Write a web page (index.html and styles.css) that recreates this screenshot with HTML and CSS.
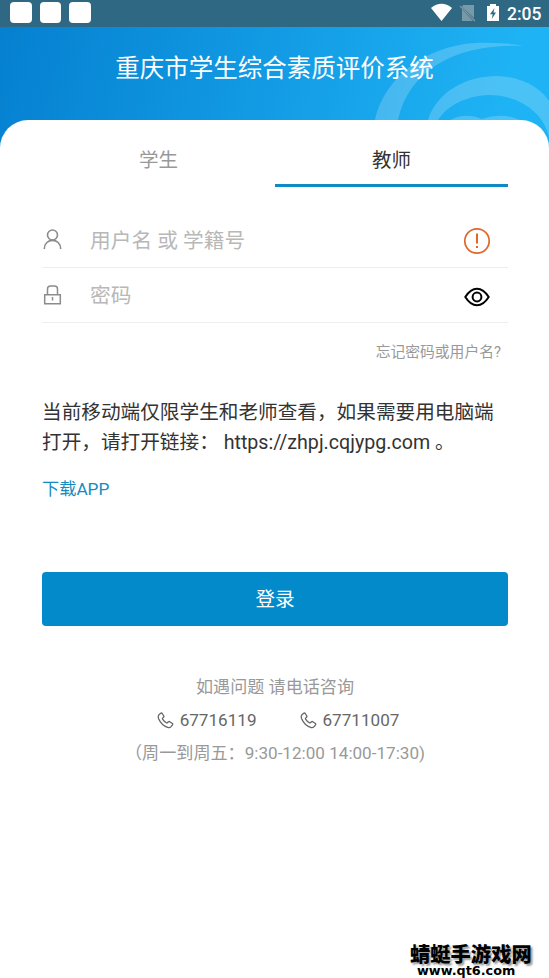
FILE: index.html
```html
<!DOCTYPE html>
<html lang="zh-CN">
<head>
<meta charset="utf-8">
<title>重庆市学生综合素质评价系统</title>
<link rel="stylesheet" href="styles.css">
</head>
<body>
<div class="status">
  <div class="notices"><i></i><i></i><i></i></div>
  <svg class="signals" width="72" height="28" viewBox="0 0 72 28">
    <path d="M1 8Q11.5-.3 22 8L11.5 21Z" fill="#fff"/>
    <path d="M33 5H44V18L32 7ZM32 9L43 21H32Z" fill="#7899a7"/>
    <path d="M30 6L45 21" stroke="#7899a7" stroke-width="1.3"/>
    <path d="M57 6H60V4H66V6H69V21H57Z" fill="#fff"/>
    <path d="M64.5 8L60 14.3H62.7L61.8 19L66 12.6H63.5Z" fill="#2f6883"/>
  </svg>
  <span class="clock">2:05</span>
</div>
<header class="hero">
  <svg class="rings" width="189" height="112" viewBox="360 27 189 112" fill="#fff">
    <path opacity=".2" d="M375 120C385 74 434 39 492 43Q510 43 524 46C462 43 410 66 398 120Z"/>
    <path opacity=".2" d="M428 120C437 91 467 76 497 76C524 77 541 89 549 101V137C544 113 519 95 489 95C465 96 447 106 438 120Z"/>
    <path opacity=".2" d="M450 120Q466 112 482 119Q502 112 520 120Z"/>
  </svg>
  <h1>重庆市学生综合素质评价系统</h1>
</header>
<main class="card">
  <nav class="tabs"><div class="tab">学生</div><div class="tab active">教师</div></nav>
  <div class="field user">
    <svg class="lead" width="22" height="24" viewBox="0 0 22 24" fill="none" stroke="#8c8c8c" stroke-width="1.6"><circle cx="10.5" cy="7" r="5"/><path d="M2.3 21C2.3 9.5 18.7 9.5 18.7 21"/></svg>
    <span>用户名 或 学籍号</span>
    <svg class="trail" width="28" height="28" viewBox="0 0 28 28" fill="none" stroke="#df672c" stroke-width="1.7"><circle cx="14" cy="14" r="12.2"/><path d="M14 6.5V16.5M14 19V21" stroke-width="2"/></svg>
  </div>
  <div class="field password">
    <svg class="lead" width="22" height="24" viewBox="0 0 22 24" fill="none" stroke="#8c8c8c" stroke-width="1.5"><path d="M2.7 11.7H18.3V20.8H2.7ZM5.5 11.5V6Q5.5 3 8.5 3H12.5Q15.5 3 15.5 6V11.5"/><path d="M10.5 14V17.5"/></svg>
    <span>密码</span>
    <svg class="trail eye" width="28" height="28" viewBox="0 0 28 28" fill="none" stroke="#000" stroke-width="2"><path d="M2.3 14Q7.5 5.7 14 5.7T25.7 14Q20.5 22.3 14 22.3T2.3 14Z"/><circle cx="14" cy="14" r="4.4"/></svg>
  </div>
  <div class="forgot">忘记密码或用户名?</div>
  <p class="tip">当前移动端仅限学生和老师查看，如果需要用电脑端<br>打开，请打开链接： <span class="url">https://zhpj.cqjypg.com</span> 。</p>
  <a class="download">下载APP</a>
  <button class="login">登录</button>
  <section class="help">
    <div>如遇问题 请电话咨询</div>
    <div class="phones">
      <span><svg width="17" height="17" viewBox="0 0 17 17"><use href="#phone"/></svg>67716119</span>
      <span><svg width="17" height="17" viewBox="0 0 17 17"><path id="phone" d="M2.2 2.5L4 1.1Q4.7.8 5.2 1.5L6.8 4Q7.1 4.7 6.5 5.2L5.6 6.1Q5.3 6.5 5.6 7.1Q7 9.4 9.4 10.8Q10 11.1 10.4 10.7L11.4 9.8Q12.1 9.3 12.7 9.7L15.4 11.5Q16 12 15.5 12.8L14.1 14.6Q12.8 16 10.7 15.4Q4.3 13 1.5 6.4Q.8 3.8 2.2 2.5Z" fill="none" stroke="#666" stroke-width="1.3"/></svg>67711007</span>
    </div>
    <div class="hours">（周一到周五：9:30-12:00 14:00-17:30)</div>
  </section>
</main>
<div class="watermark"><b>蜻蜓手游戏网</b><span>www.qt6.com</span></div>
</body>
</html>
```
FILE: styles.css
```css
* { box-sizing: border-box; }
body {
  margin: 0;
  height: 978px;
  overflow: hidden;
  position: relative;
  background: #fff;
  color: #333;
  font-family: Roboto, "Noto Sans CJK SC", sans-serif;
  white-space: nowrap;
}
svg { display: block; flex: none; }
.status {
  height: 27px;
  background: #2f6883;
  display: flex;
  padding: 0 7px 0 10px;
}
.notices { display: flex; gap: 8px; padding-top: 2px; }
.notices i { width: 21.5px; height: 21px; border-radius: 4px; background: #fff; }
.signals { margin-left: auto; }
.clock {
  width: 35px;
  margin-left: 5px;
  color: #fff;
  font-size: 17.5px;
  font-weight: 500;
  line-height: 28px;
}
.hero {
  height: 123px;
  position: relative;
  background: linear-gradient(105deg, #0580d0 0%, #139ce5 50%, #1eb3f4 90%);
}
.rings { position: absolute; right: 0; top: 0; }
h1 {
  position: relative;
  margin: 0;
  padding-top: 23px;
  text-align: center;
  color: #fff;
  font-size: 24.5px;
  line-height: 38px;
  font-weight: 400;
}
.card {
  position: relative;
  margin-top: -30px;
  height: 858px;
  padding: 0 41px 0 42px;
  border-radius: 28px 28px 0 0;
  background: #fff;
}
.tabs { display: flex; height: 67px; }
.tab {
  flex: 1;
  text-align: center;
  padding-top: 23px;
  font-size: 19.5px;
  line-height: 36px;
  color: #999;
}
.active { color: #333; border-bottom: 3px solid #0c8bc4; }
.field {
  display: flex;
  align-items: center;
  border-bottom: 1px solid #eee;
  font-size: 20.7px;
  color: #b8b8b8;
}
.field span { margin: 0 0 2px 26px; }
.user { height: 55px; margin-top: 26px; }
.password { height: 55px; }
.trail { margin: 2px 17px 0 auto; }
.eye { margin-top: 4px; }
.forgot {
  margin-top: 17px;
  padding-right: 7px;
  text-align: right;
  color: #999;
  font-size: 14.8px;
  line-height: 24px;
}
.tip { margin: 34px 0 0; font-size: 19.65px; line-height: 30px; }
.download {
  display: block;
  margin-top: 17px;
  color: #148cc0;
  font-size: 17.2px;
  line-height: 28px;
}
.login {
  display: block;
  width: 100%;
  height: 54px;
  margin-top: 69px;
  padding: 0 0 4px;
  border: 0;
  border-radius: 4px;
  background: #038acb;
  color: #fff;
  font: inherit;
  font-size: 19.6px;
}
.help {
  margin-top: 45px;
  text-align: center;
  color: #999;
  font-size: 17.1px;
  line-height: 33px;
}
.phones { display: flex; justify-content: center; gap: 43px; color: #666; padding-left: 6px; }
.phones span { display: flex; align-items: center; gap: 6px; }
.watermark {
  position: absolute;
  left: 410px;
  top: 942px;
  color: #000;
}
.watermark b {
  display: block;
  font-family: "Noto Sans CJK SC", sans-serif;
  font-size: 20.3px;
  line-height: 22px;
  font-weight: 900;
  text-shadow: 2px 2px 2px #999;
}
.watermark span {
  display: block;
  margin-left: 7px;
  font: bold 12.8px/14px "DejaVu Sans", sans-serif;
}
```
